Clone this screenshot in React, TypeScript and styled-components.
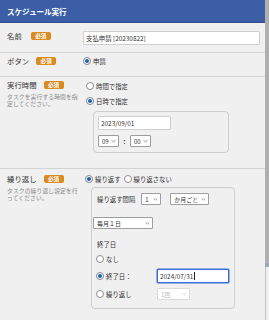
import React from "react";
import styled, { createGlobalStyle } from "styled-components";

const Global = createGlobalStyle`
  html, body { margin: 0; padding: 0; background: #f0f0f0; }
  body { font-family: "Noto Sans CJK JP", "Noto Sans", sans-serif; color: #333; }
  * { box-sizing: border-box; }
`;

const Page = styled.div`
  display: flex;
  width: 269px;
  height: 320px;
  overflow: hidden;
  background: #f0f0f0;
`;

const Panel = styled.div`
  width: 265px;
  display: flex;
  flex-direction: column;
`;

const Scroll = styled.div`
  width: 4px;
  display: flex;
  flex-direction: column;
`;

const Thumb = styled.div`
  height: 263px;
  background: #afafaf;
`;

const ThumbCap = styled.div`
  height: 4px;
  background: #9ea6b3;
`;

const Track = styled.div`
  flex: 1;
  border-left: 1px solid #c4c4c4;
`;

const Header = styled.div`
  height: 23px;
  background: #3b5ea6;
  border-bottom: 1px solid #2c4c8e;
  color: #fff;
  font-size: 7.6px;
  font-weight: 700;
  display: flex;
  align-items: center;
  padding-left: 7px;
  letter-spacing: -0.1px;
`;

const Row = styled.div<{ $h: number; $pt: number; $last?: boolean }>`
  display: grid;
  grid-template-columns: 83px 1fr;
  height: ${(p) => p.$h}px;
  padding-top: ${(p) => p.$pt}px;
  padding-right: 5px;
  border-bottom: ${(p) => (p.$last ? "none" : "1px solid #d3d3d3")};
  flex-shrink: 0;
`;

const LabelCol = styled.div<{ $mt: number }>`
  padding-left: 7px;
  margin-top: ${(p) => p.$mt}px;
`;

const LabelLine = styled.div<{ $gap: number }>`
  display: flex;
  align-items: center;
  gap: ${(p) => p.$gap}px;
  height: 8px;
  font-size: 7.4px;
  line-height: 8px;
  color: #333;
`;

const Badge = styled.span`
  display: inline-flex;
  align-items: center;
  justify-content: center;
  width: 20px;
  height: 8px;
  border-radius: 2px;
  background: #d98a20;
  color: #fff;
  font-size: 5.6px;
  font-weight: 700;
  line-height: 8px;
`;

const Desc = styled.div`
  margin-top: 4px;
  font-size: 5.8px;
  line-height: 7px;
  color: #8a8a8a;
  width: 74px;
  letter-spacing: 0.1px;
`;

const Content = styled.div<{ $pl: number; $gap?: number }>`
  display: flex;
  flex-direction: column;
  align-items: flex-start;
  gap: ${(p) => p.$gap ?? 0}px;
  padding-left: ${(p) => p.$pl}px;
`;

const TextBox = styled.div<{ $w?: number; $focus?: boolean }>`
  width: ${(p) => (p.$w ? `${p.$w}px` : "100%")};
  height: 14px;
  background: #fff;
  border: 1px solid ${(p) => (p.$focus ? "#3a6fd6" : "#cfcfcf")};
  border-radius: 1px;
  display: flex;
  align-items: center;
  padding-left: 2px;
  font-size: 6.4px;
  color: #333;
  box-shadow: ${(p) => (p.$focus ? "0 0 0 0.5px #3a6fd6" : "none")};
`;

const Caret = styled.span`
  display: inline-block;
  width: 1px;
  height: 8px;
  background: #222;
  margin-left: 0.5px;
`;

const RadioLine = styled.label<{ $h?: number }>`
  display: flex;
  align-items: center;
  gap: 2px;
  height: ${(p) => p.$h ?? 10}px;
  font-size: 6.4px;
  color: #333;
  white-space: nowrap;
`;

const Circle = styled.span<{ $on?: boolean }>`
  width: 8px;
  height: 8px;
  border-radius: 50%;
  border: 1px solid ${(p) => (p.$on ? "#7d8594" : "#8e8e8e")};
  background: #fff;
  display: inline-flex;
  align-items: center;
  justify-content: center;
  flex-shrink: 0;
  &::after {
    content: "";
    display: ${(p) => (p.$on ? "block" : "none")};
    width: 4px;
    height: 4px;
    border-radius: 50%;
    background: #1f5fb0;
  }
`;

const Radio = ({ on, children, h }: { on?: boolean; children: React.ReactNode; h?: number }) => (
  <RadioLine $h={h}>
    <Circle $on={on} />
    {children}
  </RadioLine>
);

const Group = styled.div<{ $w: number; $ml: number; $h: number; $pt: number; $pl: number }>`
  width: ${(p) => p.$w}px;
  height: ${(p) => p.$h}px;
  margin-left: ${(p) => p.$ml}px;
  padding-top: ${(p) => p.$pt}px;
  padding-left: ${(p) => p.$pl}px;
  border: 1px solid #cdcdcd;
  border-radius: 4px;
  display: flex;
  flex-direction: column;
  align-items: flex-start;
`;

const SelectBox = styled.div<{ $w: number; $h?: number; $disabled?: boolean }>`
  width: ${(p) => p.$w}px;
  height: ${(p) => p.$h ?? 12}px;
  background: #fff;
  border: 1px solid ${(p) => (p.$disabled ? "#dadada" : "#9d9d9d")};
  border-radius: 1px;
  display: flex;
  align-items: center;
  justify-content: space-between;
  padding: 0 2px 0 3px;
  font-size: 6px;
  color: ${(p) => (p.$disabled ? "#b8b8b8" : "#333")};
  flex-shrink: 0;
`;

const Chevron = ({ c = "#666" }: { c?: string }) => (
  <svg width="5" height="4" viewBox="0 0 5 4">
    <path d="M0.6 1.2 L2.5 3 L4.4 1.2" fill="none" stroke={c} strokeWidth="0.7" />
  </svg>
);

const Select = ({ w, h, children, disabled }: { w: number; h?: number; children: React.ReactNode; disabled?: boolean }) => (
  <SelectBox $w={w} $h={h} $disabled={disabled}>
    <span>{children}</span>
    <Chevron c={disabled ? "#c4c4c4" : "#666"} />
  </SelectBox>
);

const HRow = styled.div<{ $gap: number; $mt?: number; $ml?: number }>`
  display: flex;
  align-items: center;
  gap: ${(p) => p.$gap}px;
  margin-top: ${(p) => p.$mt ?? 0}px;
  margin-left: ${(p) => p.$ml ?? 0}px;
  font-size: 6.4px;
  color: #333;
  white-space: nowrap;
`;

const Colon = styled.span`
  font-weight: 700;
  font-size: 7px;
  width: 3px;
  text-align: center;
`;

const SubLabel = styled.div<{ $mt: number }>`
  margin-top: ${(p) => p.$mt}px;
  font-size: 6.4px;
  line-height: 8px;
  color: #333;
  margin-left: 5px;
`;

const EndGrid = styled.div`
  display: grid;
  grid-template-columns: 61px auto;
  align-items: center;
  row-gap: 5px;
  margin-left: 4px;
  margin-top: 5px;
`;

export default function App() {
  return (
    <>
      <Global />
      <Page>
        <Panel>
          <Header>スケジュール実行</Header>
          <Row $h={30} $pt={8}>
            <LabelCol $mt={1}>
              <LabelLine $gap={9}>
                名前<Badge>必須</Badge>
              </LabelLine>
            </LabelCol>
            <Content $pl={0}>
              <TextBox>支払申請 [20230822]</TextBox>
            </Content>
          </Row>
          <Row $h={24} $pt={4}>
            <LabelCol $mt={0}>
              <LabelLine $gap={7}>
                ボタン<Badge>必須</Badge>
              </LabelLine>
            </LabelCol>
            <Content $pl={0}>
              <Radio on h={8}>申請</Radio>
            </Content>
          </Row>
          <Row $h={92} $pt={4}>
            <LabelCol $mt={0}>
              <LabelLine $gap={7}>
                実行時間<Badge>必須</Badge>
              </LabelLine>
              <Desc>タスクを実行する時間を指定してください。</Desc>
            </LabelCol>
            <Content $pl={3} $gap={5}>
              <Radio>時間で指定</Radio>
              <Radio on>日時で指定</Radio>
              <Group $w={136} $h={42} $ml={7} $pt={4} $pl={4}>
                <TextBox $w={73}>2023/09/01</TextBox>
                <HRow $gap={4} $mt={5}>
                  <Select w={21}>09</Select>
                  <Colon>:</Colon>
                  <Select w={21}>00</Select>
                </HRow>
              </Group>
            </Content>
          </Row>
          <Row $h={151} $pt={5} $last>
            <LabelCol $mt={1}>
              <LabelLine $gap={7}>
                繰り返し<Badge>必須</Badge>
              </LabelLine>
              <Desc>タスクの繰り返し設定を行ってください。</Desc>
            </LabelCol>
            <Content $pl={2} $gap={3}>
              <HRow $gap={3}>
                <Radio on>繰り返す</Radio>
                <Radio>繰り返さない</Radio>
              </HRow>
              <Group $w={144} $h={122} $ml={6} $pt={5} $pl={0}>
                <HRow $gap={6} $ml={5}>
                  <span>繰り返す間隔</span>
                  <Select w={20}>1</Select>
                  <HRow $gap={0} $ml={3}>
                    <Select w={39}>か月ごと</Select>
                  </HRow>
                </HRow>
                <HRow $gap={0} $mt={12} $ml={1}>
                  <Select w={60}>毎月１日</Select>
                </HRow>
                <SubLabel $mt={12}>終了日</SubLabel>
                <EndGrid>
                  <Radio h={10}>なし</Radio>
                  <span />
                  <Radio on h={14}>終了日：</Radio>
                  <TextBox $w={72} $focus>
                    2024/07/31<Caret />
                  </TextBox>
                  <Radio h={11}>繰り返し</Radio>
                  <Select w={33} disabled>1回</Select>
                </EndGrid>
              </Group>
            </Content>
          </Row>
        </Panel>
        <Scroll>
          <Thumb />
          <ThumbCap />
          <Track />
        </Scroll>
      </Page>
    </>
  );
}
